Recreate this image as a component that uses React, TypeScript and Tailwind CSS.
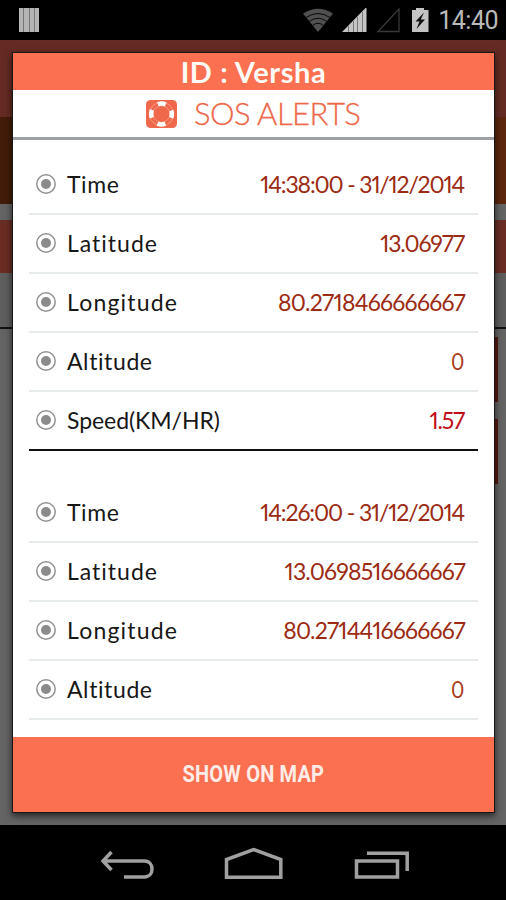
type RowData = { label: string; value: string; labelClass: string; valueClass: string; line: string };

const light = 'bg-[#e6eaeb]';

const first: RowData[] = [
  { label: 'Time', value: '14:38:00 - 31/12/2014', labelClass: 'tracking-[0.6px]', valueClass: 'text-[#9c2b13] tracking-[-1.16px] mr-[1px]', line: light },
  { label: 'Latitude', value: '13.06977', labelClass: 'tracking-[1px]', valueClass: 'text-[#9c2b13] tracking-[-1.1px] mr-[1px]', line: light },
  { label: 'Longitude', value: '80.2718466666667', labelClass: 'tracking-[1.2px]', valueClass: 'text-[#9c2b13] tracking-[-0.72px]', line: light },
  { label: 'Altitude', value: '0', labelClass: 'tracking-[0.6px]', valueClass: 'text-[#a93b20] scale-x-[0.88]', line: light },
  { label: 'Speed(KM/HR)', value: '1.57', labelClass: 'tracking-[-0.05px]', valueClass: 'text-[#c00d18] tracking-[-1.2px] mr-[1px]', line: 'bg-[#111]' },
];

const second: RowData[] = [
  { label: 'Time', value: '14:26:00 - 31/12/2014', labelClass: 'tracking-[0.6px]', valueClass: 'text-[#9c2b13] tracking-[-1.12px] mr-[1px]', line: light },
  { label: 'Latitude', value: '13.0698516666667', labelClass: 'tracking-[1px]', valueClass: 'text-[#9c2b13] tracking-[-0.8px]', line: light },
  { label: 'Longitude', value: '80.2714416666667', labelClass: 'tracking-[1.2px]', valueClass: 'text-[#9c2b13] tracking-[-0.8px]', line: light },
  { label: 'Altitude', value: '0', labelClass: 'tracking-[0.6px]', valueClass: 'text-[#a93b20] scale-x-[0.88]', line: light },
];

function Row({ row }: { row: RowData }) {
  return (
    <div className="flex h-[59px] flex-col">
      <div className="flex flex-1 items-center pl-[6px] pr-[13px] text-[23px] leading-none whitespace-nowrap">
        <svg width="22" height="22" viewBox="0 0 22 22" className="-mt-px mr-[10px] shrink-0">
          <circle cx="11" cy="11" r="9.2" fill="none" stroke="#929292" strokeWidth="1.5" />
          <circle cx="11" cy="11" r="5" fill="#8b8b8b" />
        </svg>
        <span className={`text-[#171717] ${row.labelClass}`}>{row.label}</span>
        <span className={`ml-auto proportional-nums ${row.valueClass}`}>{row.value}</span>
      </div>
      <div className={`h-[2px] shrink-0 ${row.line}`} />
    </div>
  );
}

function StatusBar() {
  return (
    <header className="flex h-10 shrink-0 items-start bg-black pt-[8px] pl-[19px] pr-[8px]">
      <div className="flex h-6 w-5 gap-px bg-[#777]">
        <i className="flex-1 bg-[#b5b5b5]" />
        <i className="flex-1 bg-[#b5b5b5]" />
        <i className="flex-1 bg-[#b5b5b5]" />
        <i className="flex-1 bg-[#b5b5b5]" />
      </div>
      <svg className="ml-auto" width="133" height="26" viewBox="300 8 133 26">
        <path d="M301 13.5Q316 4 331 13.5L316 32Z" fill="#505050" />
        <g fill="none" stroke="#080808" strokeWidth="1">
          <path d="M304 17.5Q316 9.5 328 17.5" />
          <path d="M307 21.5Q316 15 325 21.5" />
          <path d="M310.500 25.500Q316 21 321.500 25.500" />
        </g>
        <path d="M340 32L364.500 7V32Z" fill="#c4c4c4" />
        <g stroke="#777" strokeWidth="1">
          <path d="M346.500 26V32M351.500 21V32M355.500 17V32M360.500 12V32" />
        </g>
        <path d="M376 31.500L397 9V31.500Z" fill="none" stroke="#383838" strokeWidth="1.3" />
        <path d="M410 10H414V8H422V10H426.500V32H410Z" fill="#c3c3c3" />
        <path d="M422 12.500L413.500 21.500H417.500L414.500 29L423 19.500H418.800Z" fill="#111" />
      </svg>
      <span className="ml-[3px] font-['Roboto',sans-serif] text-[25px] leading-[26px] tracking-[-0.5px] text-[#b9b9b9]">14:40</span>
    </header>
  );
}

function Backdrop() {
  return (
    <div className="flex flex-1 flex-col bg-[#646464]">
      <div className="h-[77px] bg-[#652b23]" />
      <div className="h-[87px] bg-linear-to-r from-[#421c08] to-[#5d270e]" />
      <div className="h-4 bg-[#646464]" />
      <div className="h-[53px] bg-[#6a2d24]" />
      <div className="h-[54px] bg-[#5e5e5e]" />
      <div className="h-[2px] bg-[#111]" />
      <div className="mt-2 ml-auto mr-2 h-[65px] w-2 bg-[#57180f]" />
      <div className="mt-[17px] ml-auto mr-2 h-[65px] w-2 bg-[#57180f]" />
    </div>
  );
}

function NavBar() {
  return (
    <nav className="h-[75px] shrink-0 bg-black">
      <svg width="506" height="75" viewBox="0 825 506 75" fill="none" stroke="#a0a0a0" strokeWidth="3.500">
        <path d="M111.500 852L103 861L111.500 870M103 861H144.500C154.500 861 154.500 877 144.500 877H124" />
        <path d="M226.500 877.200V859.500L253.500 849.500L280.800 859.500V877.200Z" />
        <path d="M356.500 861H397.500V877H356.500ZM367 853.300H407.200V871" />
      </svg>
    </nav>
  );
}

export default function App() {
  return (
    <div className="relative flex h-[900px] w-[506px] flex-col overflow-hidden font-['Lato','Liberation_Sans',sans-serif]">
      <StatusBar />
      <Backdrop />
      <NavBar />
      <section className="absolute top-[53px] left-[13px] flex h-[759px] w-[481px] flex-col bg-white shadow-[0_0_0_1px_#171717,0_3px_7px_1px_rgba(0,0,0,0.65)]">
        <div className="flex h-[37px] shrink-0 items-center justify-center bg-[#fb7050] text-[29px] leading-none font-bold text-[#fffaf5]">
          <span className="tracking-[0.6px] whitespace-nowrap">ID : Versha</span>
        </div>
        <div className="flex h-[47px] shrink-0 items-center pl-[133px] text-[#ee684a]">
          <svg width="31" height="28" viewBox="0 0 31 28" className="shrink-0">
            <rect width="31" height="28" rx="4.500" fill="#f0684b" />
            <circle cx="15.500" cy="14" r="12" fill="none" stroke="#fff" strokeOpacity="0.35" strokeWidth="0.900" />
            <circle cx="15.500" cy="14" r="10.400" fill="none" stroke="#fff" strokeWidth="4.500" strokeDasharray="8 8.336" strokeDashoffset="4" />
            <circle cx="15.500" cy="14" r="8.400" fill="none" stroke="#fff" strokeOpacity="0.35" strokeWidth="0.800" />
          </svg>
          <span className="ml-[17px] text-[31px] leading-none font-light tracking-[-0.5px] whitespace-nowrap [-webkit-text-stroke:0.3px_#ee684a]">SOS ALERTS</span>
        </div>
        <div className="h-[3px] shrink-0 bg-[#9da1a3]" />
        <div className="flex flex-1 flex-col px-4 pt-[16px]">
          {first.map((row) => <Row key={row.label} row={row} />)}
          <div className="h-[33px]" />
          {second.map((row) => <Row key={row.label} row={row} />)}
        </div>
        <button className="flex h-[75px] shrink-0 items-center justify-center bg-[#fb7050] font-['Roboto',sans-serif] text-[23px] leading-none font-bold text-[#ffece7]">
          <span className="scale-x-[0.87] tracking-[0.2px] whitespace-nowrap">SHOW ON MAP</span>
        </button>
      </section>
    </div>
  );
}
